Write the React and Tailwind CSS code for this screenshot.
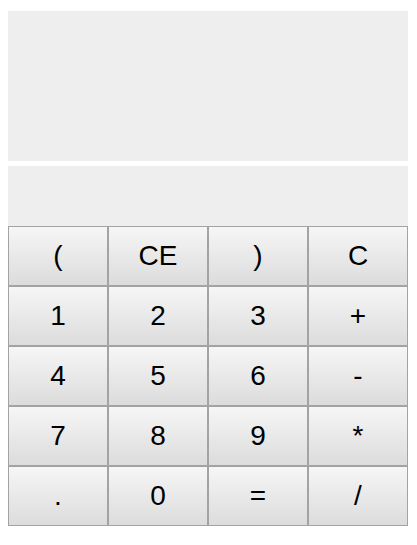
import React, { useState } from 'react';

const keys = ['(', 'CE', ')', 'C', '1', '2', '3', '+', '4', '5', '6', '-', '7', '8', '9', '*', '.', '0', '=', '/'];

const App = () => {
  const [expr, setExpr] = useState('');
  const [result, setResult] = useState('');

  const press = (k) => {
    if (k === 'C') { setExpr(''); setResult(''); return; }
    if (k === 'CE') { setExpr(expr.slice(0, -1)); return; }
    if (k === '=') {
      try {
        // eslint-disable-next-line no-new-func
        setResult(String(Function(`return (${expr})`)()));
      } catch (e) {
        setResult('Error');
      }
      return;
    }
    setExpr(expr + k);
  };

  return (
    <div className="w-[417px] h-[545px] bg-white px-2 pt-[11px] font-['Liberation_Sans',Arial,sans-serif]">
      <div className="w-[400px] h-[150px] bg-[#eeeeee] text-right text-[28px] p-2 overflow-hidden">{expr}</div>
      <div className="w-[400px] h-[60px] mt-[5px] bg-[#eeeeee] text-right text-[28px] p-2 overflow-hidden">{result}</div>
      <div className="grid grid-cols-4 w-[400px]">
        {keys.map((k) => (
          <button
            key={k}
            onClick={() => press(k)}
            className="h-[60px] border border-[#a3a3a3] bg-gradient-to-b from-[#f6f6f6] to-[#dcdcdc] text-[28px] leading-none text-black"
          >
            {k}
          </button>
        ))}
      </div>
    </div>
  );
};

export default App;
